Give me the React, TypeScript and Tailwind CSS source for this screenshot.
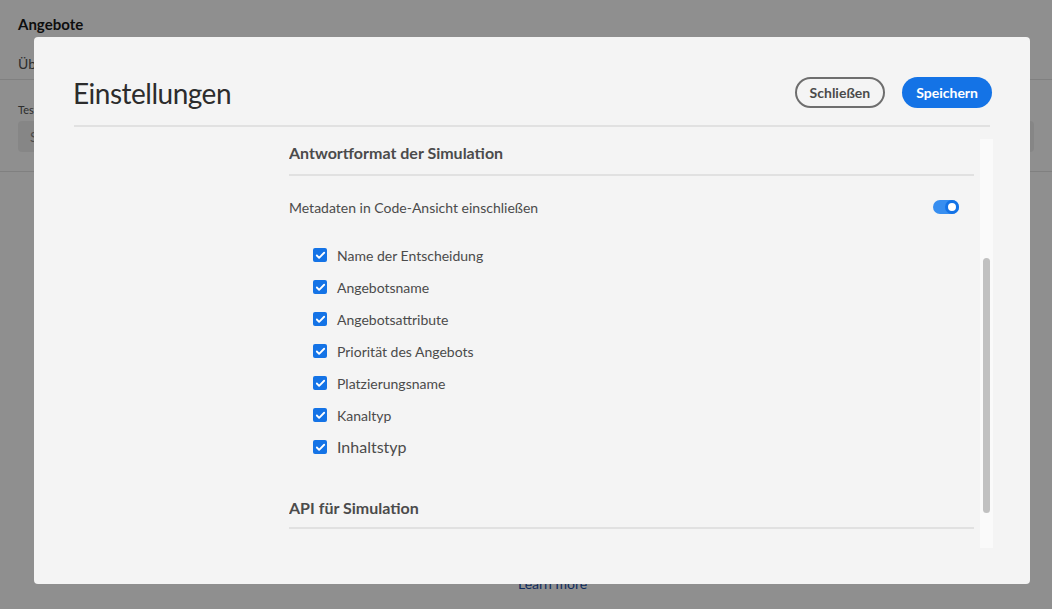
import { Check } from 'lucide-react';

const font = { fontFamily: 'Lato, "Noto Sans", sans-serif' };

const options = [
  'Name der Entscheidung',
  'Angebotsname',
  'Angebotsattribute',
  'Priorität des Angebots',
  'Platzierungsname',
  'Kanaltyp',
];

function Checkbox({ label, big }: { label: string; big?: boolean }) {
  return (
    <div className="flex h-[32px] items-center pl-[24px]">
      <span className="flex h-[14px] w-[14px] items-center justify-center rounded-[2px] bg-[#1473e6]">
        <Check className="h-[11px] w-[11px] text-white" strokeWidth={4} />
      </span>
      <span className={`ml-[10px] text-[#4b4b4b] ${big ? 'text-[16px]' : 'text-[14px]'}`}>{label}</span>
    </div>
  );
}

function Background() {
  return (
    <div className="h-[609px] w-full bg-white text-[#1a1a1a]">
      <div className="px-[18px] pt-[13px] text-[15px] font-bold">Angebote</div>
      <div className="mt-[14px] flex h-[30px] items-start border-b border-[#e4e4e4] px-[18px] pt-[3px] text-[14px] text-[#505050]">
        Übersicht
      </div>
      <div className="px-[18px] pt-[22px] text-[11px] text-[#505050]">Testen</div>
      <div className="mx-[18px] mt-[3px] flex h-[31px] items-center rounded-[4px] bg-[#efefef] px-[12px] text-[14px] text-[#888]">
        Suchen
      </div>
      <div className="mt-[19px] border-b border-[#e4e4e4]" />
      <div className="pt-[401px] pl-[518px] text-[14px] text-[#1b4fa8]">Learn more</div>
    </div>
  );
}

export default function App() {
  return (
    <div className="relative h-[609px] w-[1052px] overflow-hidden" style={font}>
      <Background />
      <div className="absolute inset-0 bg-[rgba(0,0,0,0.44)]" />
      <div className="absolute left-[34px] top-[37px] flex h-[547px] w-[996px] flex-col rounded-[4px] bg-[#f4f4f4] px-[40px] pt-[40px]">
        <div className="flex h-[31px] items-center justify-between">
          <h1 className="-ml-[1px] text-[28px] leading-none tracking-[-0.5px] text-[#2c2c2c]">Einstellungen</h1>
          <div className="mr-[-2px] flex items-center gap-[17px]">
            <button className="h-[31px] rounded-full border-2 border-[#6e6e6e] px-[13px] text-[14px] font-bold text-[#4b4b4b]">
              Schließen
            </button>
            <button className="h-[31px] rounded-full bg-[#1473e6] px-[14px] text-[14px] font-bold text-white">
              Speichern
            </button>
          </div>
        </div>
        <div className="mt-[17px] h-[2px] bg-[#e1e1e1]" />
        <div className="mr-[-3px] mt-[12px] flex h-[409px]">
          <div className="w-[215px] shrink-0" />
          <div className="w-[685px] shrink-0 overflow-hidden">
            <div className="pt-[3px]">
              <h2 className="h-[22px] text-[16px] font-bold leading-[22px] text-[#4b4b4b]">
                Antwortformat der Simulation
              </h2>
              <div className="mt-[10px] h-[2px] bg-[#e1e1e1]" />
              <div className="mt-[15px] flex h-[32px] items-center justify-between pr-[15px]">
                <span className="text-[14px] text-[#4b4b4b]">Metadaten in Code-Ansicht einschließen</span>
                <span className="flex h-[14px] w-[26px] items-center justify-end rounded-full bg-[#378ef0]">
                  <span className="h-[14px] w-[14px] rounded-full border-[3px] border-[#1473e6] bg-white" />
                </span>
              </div>
              <div className="mt-[16px]">
                {options.map(o => (
                  <Checkbox key={o} label={o} />
                ))}
                <Checkbox label="Inhaltstyp" big />
              </div>
              <h2 className="mt-[34px] h-[22px] text-[16px] font-bold leading-[22px] text-[#4b4b4b]">
                API für Simulation
              </h2>
              <div className="mt-[8px] h-[2px] bg-[#e1e1e1]" />
            </div>
          </div>
          <div className="ml-[6px] flex w-[13px] shrink-0 flex-col bg-[#fafafa] px-[3px] pt-[119px]">
            <div className="h-[255px] rounded-full bg-[#c1c1c1]" />
          </div>
        </div>
      </div>
    </div>
  );
}
